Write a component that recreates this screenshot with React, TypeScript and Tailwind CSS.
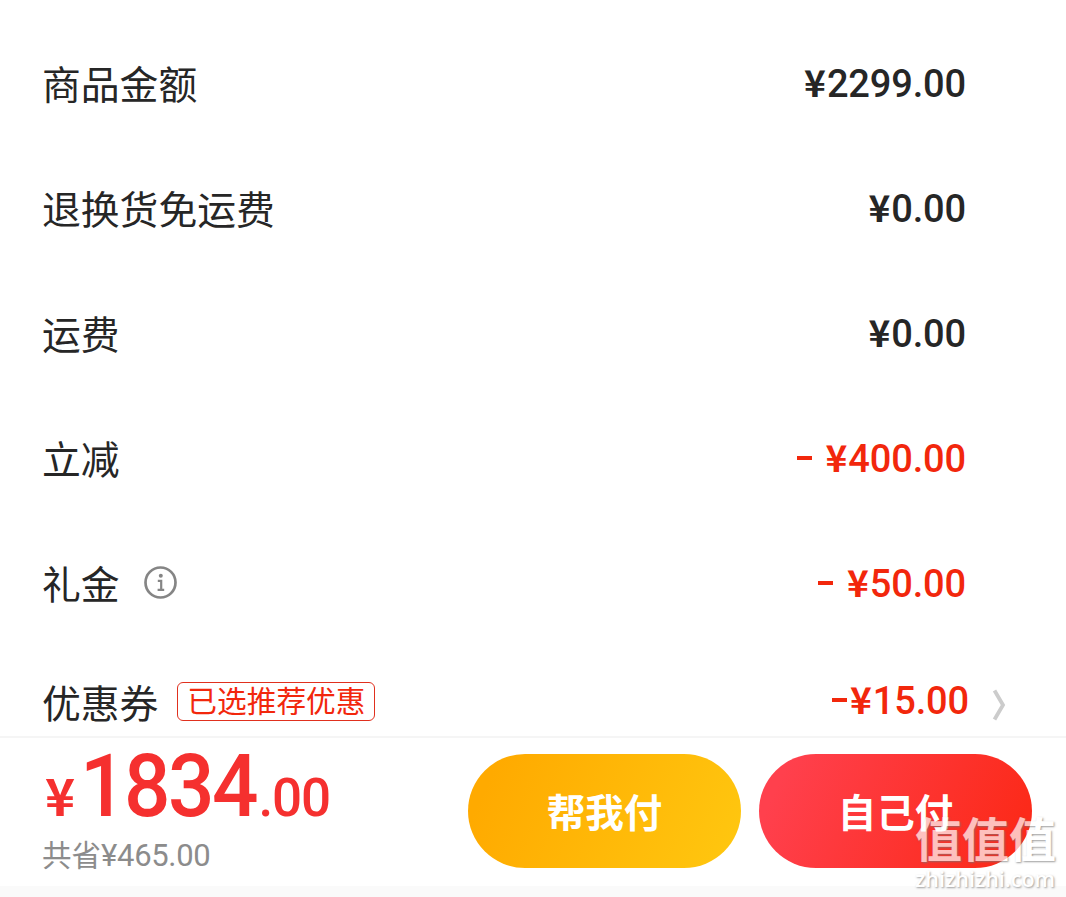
import clsx from "clsx";

interface PriceRow {
  label: string;
  value: string;
  minus?: boolean;
  info?: boolean;
}

const rows: PriceRow[] = [
  { label: "商品金额", value: "2299.00" },
  { label: "退换货免运费", value: "0.00" },
  { label: "运费", value: "0.00" },
  { label: "立减", value: "400.00", minus: true },
  { label: "礼金", value: "50.00", minus: true, info: true },
];

function InfoIcon() {
  return (
    <svg
      className="ml-[24px] h-[34px] w-[34px]"
      viewBox="0 0 34 34"
      fill="none"
      stroke="#858585"
      strokeWidth="2.7"
    >
      <circle cx="16.5" cy="16.5" r="15" />
      <path d="M13.8 14.8h3.4v9M13.6 23.8h6.6" strokeWidth="2.2" />
      <circle cx="16.8" cy="9.8" r="2" fill="#858585" stroke="none" />
    </svg>
  );
}

function Minus({ className }: { className?: string }) {
  return <span className={clsx("h-[4px] w-[15px] bg-[#f2270c]", className)} />;
}

function Price({ value }: { value: string }) {
  return (
    <span className="flex items-baseline">
      <span className="mr-px text-[37px] leading-[38px] font-bold">¥</span>
      <span className="font-[Roboto,sans-serif] text-[38px] leading-[38px] font-medium tracking-[-0.15px]">
        {value}
      </span>
    </span>
  );
}

function App() {
  return (
    <div className="relative flex h-[897px] w-[1066px] flex-col overflow-hidden bg-white font-['Noto_Sans_CJK_SC',sans-serif] text-[#262626]">
      {/* Price breakdown */}
      <div className="h-[736px] shrink-0 pt-[20px]">
        {rows.map((row) => (
          <div key={row.label} className="flex h-[125px] items-center justify-between pr-[100px] pl-[42px]">
            <div className="flex items-center">
              <span className="text-[38.8px] leading-[39px]">{row.label}</span>
              {row.info && <InfoIcon />}
            </div>
            <div className={clsx("flex items-center", row.minus && "text-[#f2270c]")}>
              {row.minus && <Minus className="mr-[14px]" />}
              <Price value={row.value} />
            </div>
          </div>
        ))}

        <div className="flex h-[112px] items-center pl-[42px]">
          <span className="text-[38.8px] leading-[39px]">优惠券</span>
          <span className="ml-[19px] flex h-[39px] w-[198px] items-center justify-center rounded-[6px] border border-[#e0301e] pb-[2px] text-[29.7px] leading-none text-[#f2270c]">
            已选推荐优惠
          </span>
          <div className="mr-[23px] mb-[3px] ml-auto flex items-center text-[#f2270c]">
            <Minus className="mr-[3px]" />
            <Price value="15.00" />
          </div>
          <svg
            className="mt-[7px] mr-[60px] h-[32px] w-[14px]"
            viewBox="0 0 14 32"
            fill="none"
            stroke="#cccccc"
            strokeWidth="3.8"
          >
            <path d="M2.5 1.5l8.5 14.5-8.5 14.5" />
          </svg>
        </div>
      </div>

      {/* Pay bar */}
      <div className="flex h-[150px] shrink-0 items-start border-t-2 border-[#f5f5f5] pt-[14px] pr-[34px] pl-[42px]">
        <div className="flex flex-col">
          <div className="flex h-[78px] items-baseline leading-[68px] font-medium text-[#f5302f]">
            <span className="ml-[3px] text-[51px] font-bold">¥</span>
            <span className="mr-[-9px] ml-[5px] origin-left scale-x-[0.94] font-[Roboto,sans-serif] text-[87px] tracking-[-2.6px]">
              1834
            </span>
            <span className="font-[Roboto,sans-serif] text-[53px] tracking-[-1.2px]">.00</span>
          </div>
          <div className="text-[29.5px] leading-[46px] text-[#8c8c8c]">
            共省<span className="font-[Roboto,sans-serif] text-[31px] tracking-[-0.3px]">¥465.00</span>
          </div>
        </div>
        <div className="mt-[2px] ml-auto flex gap-[18px] text-[38.5px] font-bold text-white">
          <button className="h-[114px] w-[273px] rounded-full bg-linear-[115deg,#ffaa00_10%,#ffc60f_95%] pb-px">
            帮我付
          </button>
          <button className="h-[114px] w-[273px] rounded-full bg-linear-[115deg,#ff404d_10%,#fc2a1a_90%] pb-px">
            自己付
          </button>
        </div>
      </div>
      <div className="grow bg-[#fafafa]" />

      {/* Site watermark */}
      <div className="pointer-events-none absolute top-[811px] left-[915px] flex flex-col text-white opacity-70 [text-shadow:1px_1px_2px_#777]">
        <span className="text-[47px] leading-[52px] font-bold">值值值</span>
        <span className="mt-[4px] font-['Open_Sans',sans-serif] text-[21.5px] leading-[24px] font-semibold">
          zhizhizhi.com
        </span>
      </div>
    </div>
  );
}

export default App;
